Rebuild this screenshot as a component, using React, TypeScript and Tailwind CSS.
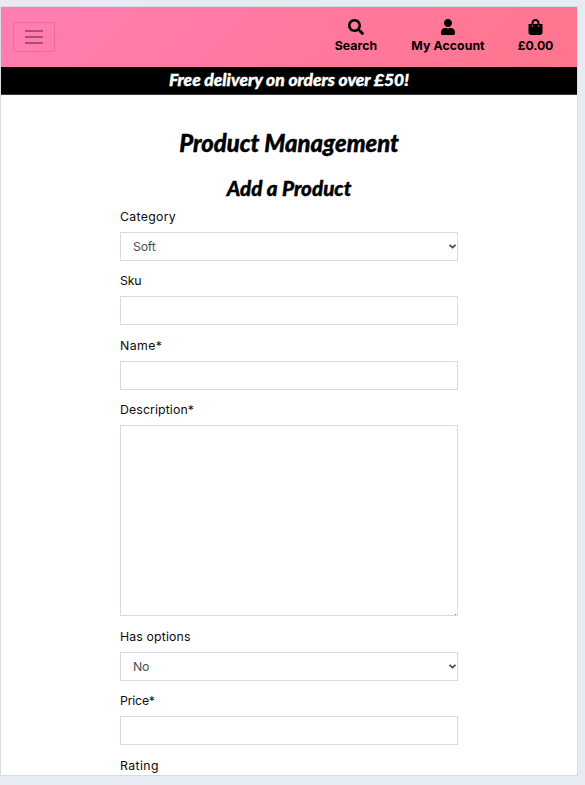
import React from "react";
import { FaSearch, FaUser, FaShoppingBag } from "react-icons/fa";

const control = "block w-full border border-[#d7dbe0] bg-white";
const display = "whitespace-nowrap font-['Lato',sans-serif] font-black italic [-webkit-text-stroke:0.4px_currentColor]";

function Field({ label, spacing, children }: { label: string; spacing: string; children?: React.ReactNode }) {
  return (
    <div className="mb-[7.6px]">
      <label className={`block h-7 whitespace-nowrap pt-[3px] text-[12.3px] leading-[19px] text-[#0c0c0c] ${spacing}`}>{label}</label>
      {children}
    </div>
  );
}

function Select({ value, spacing }: { value: string; spacing: string }) {
  return (
    <div className={`${control} flex h-[28.8px] items-center justify-between pl-3 pr-px text-[12.3px] text-[#495057]`}>
      <span className={`pt-[2px] ${spacing}`}>{value}</span>
      <svg width="7" height="5" viewBox="0 0 7 5" fill="none" stroke="#42474d" strokeWidth="1.7">
        <path d="M.5.8 3.5 3.6 6.5.8" />
      </svg>
    </div>
  );
}

export default function App() {
  return (
    <div className="h-[785px] w-[585px] overflow-hidden bg-[#e7ecf4] pt-[6px] font-['Inter',sans-serif]">
      <div className="h-[770px] w-[578px] overflow-hidden border border-[#d9dce1] bg-white">
        <header className="flex h-[60px] items-center justify-between bg-linear-[135deg,#ff7eb3,#ff758c] pl-3 pr-6">
          <button className="flex h-[30px] w-[42px] flex-col items-center justify-center gap-1 rounded-[3px] border border-black/10">
            <span className="h-[2px] w-[18px] bg-[#a65275]" />
            <span className="h-[2px] w-[18px] bg-[#a65275]" />
            <span className="h-[2px] w-[18px] bg-[#a65275]" />
          </button>
          <nav className="flex gap-[33px] whitespace-nowrap text-[12.3px] font-bold leading-[18px] text-black">
            <a className="flex w-[44px] flex-col items-center gap-[2px]">
              <FaSearch size={16} />
              <span className="tracking-[0.05px]">Search</span>
            </a>
            <a className="flex w-[74px] flex-col items-center gap-[2px]">
              <FaUser className="h-4 w-[14px]" />
              <span className="tracking-[0.08px]">My Account</span>
            </a>
            <a className="flex w-[35px] flex-col items-center gap-[2px]">
              <FaShoppingBag className="h-4 w-[15px]" />
              <span className="tracking-[-0.1px]">£0.00</span>
            </a>
          </nav>
        </header>
        <div className={`${display} flex h-7 justify-center border-b border-[#38383b] bg-black text-[17.4px] leading-[25px] text-white`}>
          <span>Free delivery on orders over £50!</span>
        </div>
        <main className="mx-auto w-[338px]">
          <h1 className={`${display} mt-[34px] h-[30px] text-center text-[23.8px] leading-[29px] text-black`}>Product Management</h1>
          <h2 className={`${display} mt-4 h-[26px] text-center text-[20.6px] leading-[26px] text-black`}>Add a Product</h2>
          <form className="pt-[3px]">
            <Field label="Category" spacing="tracking-[0.3px]"><Select value="Soft" spacing="tracking-[-0.2px]" /></Field>
            <Field label="Sku" spacing="tracking-[-0.2px]"><input className={`${control} h-[28.8px]`} /></Field>
            <Field label="Name*" spacing="tracking-[0.4px]"><input className={`${control} h-[28.8px]`} /></Field>
            <Field label="Description*" spacing="tracking-[0.12px]">
              <div className="relative">
                <textarea className={`${control} h-[191px] resize-none`} />
                <span className="absolute bottom-px right-[2px] size-px bg-[#6b6f74]" />
              </div>
            </Field>
            <Field label="Has options" spacing="tracking-[0.15px]"><Select value="No" spacing="tracking-[-0.2px]" /></Field>
            <Field label="Price*" spacing="tracking-[-0.2px]"><input className={`${control} h-[28.8px]`} /></Field>
            <Field label="Rating" spacing="tracking-[0.4px]" />
          </form>
        </main>
      </div>
    </div>
  );
}
